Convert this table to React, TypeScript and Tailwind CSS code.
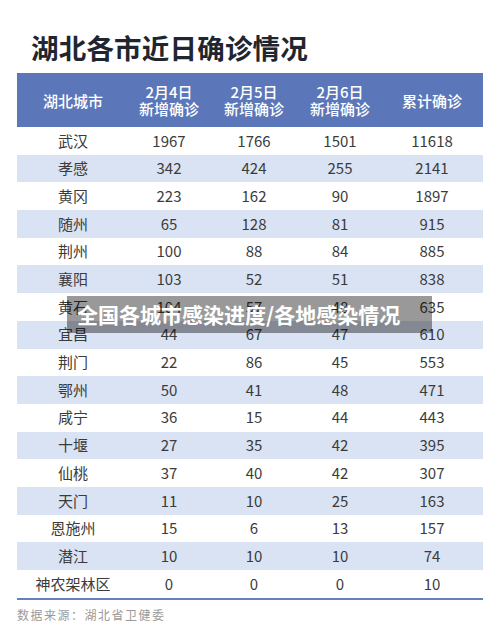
import React from 'react';

const rows: [string, string, string, string, string][] = [
  ['武汉', '1967', '1766', '1501', '11618'],
  ['孝感', '342', '424', '255', '2141'],
  ['黄冈', '223', '162', '90', '1897'],
  ['随州', '65', '128', '81', '915'],
  ['荆州', '100', '88', '84', '885'],
  ['襄阳', '103', '52', '51', '838'],
  ['黄石', '104', '57', '48', '635'],
  ['宜昌', '44', '67', '47', '610'],
  ['荆门', '22', '86', '45', '553'],
  ['鄂州', '50', '41', '48', '471'],
  ['咸宁', '36', '15', '44', '443'],
  ['十堰', '27', '35', '42', '395'],
  ['仙桃', '37', '40', '42', '307'],
  ['天门', '11', '10', '25', '163'],
  ['恩施州', '15', '6', '13', '157'],
  ['潜江', '10', '10', '10', '74'],
  ['神农架林区', '0', '0', '0', '10'],
];

const font = { fontFamily: '"Noto Sans CJK SC", "Noto Sans", sans-serif' };
const cols = 'grid grid-cols-[112px_80px_90px_82px_102px]';

const App = () => {
  return (
    <div className="relative w-[500px] h-[629px] bg-white overflow-hidden" style={font}>
      {/* Title */}
      <h1 className="pl-[31px] pt-[28px] h-[73px] text-[27.5px] leading-[38px] font-bold text-[#1f2630] tracking-[0.2px]">
        湖北各市近日确诊情况
      </h1>

      {/* Table */}
      <div className="mx-[17px] w-[466px]">
        <div className={`${cols} h-[54px] bg-[#5b77b9] text-white text-[15px] leading-[17px] font-medium items-center text-center`}>
          <div>湖北城市</div>
          <div>2月4日<br />新增确诊</div>
          <div>2月5日<br />新增确诊</div>
          <div>2月6日<br />新增确诊</div>
          <div>累计确诊</div>
        </div>
        {rows.map((r, i) => (
          <div
            key={r[0]}
            className={`${cols} h-[27.7px] items-center text-center text-[15px] text-[#3b3b3b] ${i % 2 === 1 ? 'bg-[#dae3f3]' : 'bg-white'}`}
          >
            {r.map((c, j) => (
              <div key={j}>{c}</div>
            ))}
          </div>
        ))}
        <div className="h-[2px] bg-[#6580bf]" />
      </div>

      {/* Source */}
      <div className="pl-[17px] pt-[6px] text-[12px] text-[#9a9a9a] tracking-[1.5px]">
        数据来源：湖北省卫健委
      </div>

      {/* Overlay caption */}
      <div className="absolute left-[67px] top-[296px] w-[365px] h-[37px] bg-black/40 flex items-center pl-[10px]">
        <span className="text-white font-bold text-[21px] leading-none">全国各城市感染进度/各地感染情况</span>
      </div>
    </div>
  );
};

export default App;
